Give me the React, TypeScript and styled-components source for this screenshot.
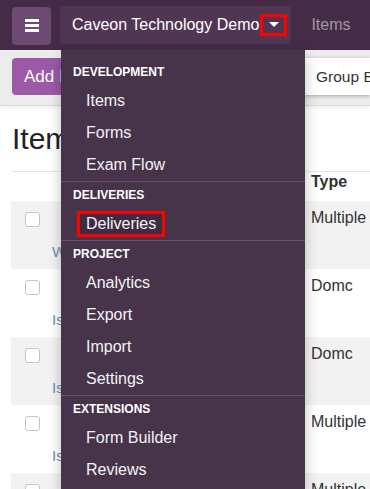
import styled, { createGlobalStyle } from "styled-components";

const GlobalStyle = createGlobalStyle`
    html, body {
        margin: 0;
        padding: 0;
        overflow: hidden;
        background: #ffffff;
        font-family: "Liberation Sans", Arial, sans-serif;
        color: #333333;
    }
`;

const Page = styled.div`
    position: relative;
    width: 370px;
    height: 489px;
    overflow: hidden;
`;

const Navbar = styled.nav`
    display: flex;
    align-items: center;
    height: 50px;
    padding: 0 12px;
    background-color: #442c46;
    box-sizing: border-box;
`;

const MenuToggle = styled.button`
    display: flex;
    flex-direction: column;
    justify-content: center;
    align-items: center;
    gap: 2px;
    width: 39px;
    height: 38px;
    padding: 0;
    border: none;
    border-radius: 4px;
    background-color: #6c4a72;
    margin-top: 1px;

    span {
        display: block;
        width: 14px;
        height: 3px;
        background: #ffffff;
    }
`;

const Brand = styled.div`
    display: flex;
    align-items: center;
    height: 38px;
    margin-left: 9px;
    margin-top: -1px;
    padding: 0 4px 0 12px;
    border-radius: 4px;
    background-color: #513654;
    color: #ffffff;
    font-size: 16px;
    white-space: nowrap;
    box-sizing: border-box;
`;

const CaretBox = styled.span`
    display: flex;
    align-items: center;
    justify-content: center;
    width: 27px;
    height: 22px;
    margin-left: 1px;
    border: 3px solid #ff0000;
    box-sizing: border-box;

    &::after {
        content: "";
        border-top: 5px solid #ffffff;
        border-left: 5px solid transparent;
        border-right: 5px solid transparent;
    }
`;

const NavLink = styled.a`
    margin-left: 20px;
    color: #a596a8;
    font-size: 16px;
    text-decoration: none;
`;

const Toolbar = styled.div`
    display: flex;
    align-items: center;
    justify-content: space-between;
    height: 56px;
    padding: 0 0 0 12px;
    background-color: #ececec;
    border-bottom: 1px solid #dadada;
    box-shadow: 0 2px 3px rgba(0, 0, 0, 0.06);
    box-sizing: border-box;
`;

const AddButton = styled.button`
    height: 37px;
    padding: 0 12px;
    border: none;
    border-radius: 4px;
    background-color: #9b59a6;
    color: #ffffff;
    font-family: inherit;
    font-size: 17px;
    margin-top: -2px;
`;

const GroupBy = styled.div`
    width: 67px;
    height: 37px;
    line-height: 37px;
    padding-left: 13px;
    margin-top: -2px;
    background: #ffffff;
    color: #333333;
    font-size: 15.5px;
    white-space: nowrap;
    overflow: hidden;
    box-shadow: 0 1px 4px rgba(0, 0, 0, 0.3);
    box-sizing: border-box;
`;

const Content = styled.main`
    padding: 16px 0 0 11px;
`;

const Heading = styled.h1`
    margin: 0;
    padding: 0 0 16px 1px;
    font-size: 30px;
    line-height: 33px;
    font-weight: 400;
    color: #222222;
    border-bottom: 1px solid #e6e6e6;
`;

const Row = styled.div<{ $striped?: boolean }>`
    display: grid;
    grid-template-columns: 33px 259px 1fr;
    height: 68px;
    padding-top: 7px;
    box-sizing: border-box;
    background-color: ${(p) => (p.$striped ? "#f2f2f2" : "#ffffff")};
`;

const HeaderRow = styled(Row)`
    height: 29px;
    padding-top: 0;
    line-height: 29px;
    font-size: 14.5px;
    font-weight: 700;
    color: #222222;
`;

const Check = styled.span`
    display: block;
    width: 15px;
    height: 15px;
    margin: 4px 0 0 14px;
    border: 1px solid #c4c4c4;
    border-radius: 3px;
    background: #ffffff;
    box-sizing: border-box;
`;

const NameCell = styled.div`
    padding-left: 8px;
    font-size: 16px;
    line-height: 20px;
`;

const Title = styled.div`
    padding-left: 24px;
    color: #333333;
    white-space: nowrap;
`;

const Tag = styled.div`
    margin-top: 14px;
    color: #6d8fb3;
    font-size: 15px;
    white-space: nowrap;
`;

const TypeCell = styled.div`
    padding-left: 8px;
    font-size: 16px;
    line-height: 20px;
    color: #333333;
    white-space: nowrap;
`;

const Menu = styled.div`
    position: absolute;
    top: 50px;
    left: 61px;
    width: 244px;
    bottom: 0;
    padding-top: 9px;
    background-color: #47334a;
    box-shadow: 0 6px 12px rgba(0, 0, 0, 0.25);
    box-sizing: border-box;
`;

const Section = styled.div`
    & + & {
        border-top: 1px solid #6b4c6f;
    }
`;

const SectionTitle = styled.div`
    padding: 7px 12px 6px;
    line-height: 13px;
    font-size: 12px;
    font-weight: 700;
    color: #ffffff;
    text-transform: uppercase;
`;

const MenuItem = styled.div`
    height: 32px;
    padding: 3px 0 3px 16px;
    box-sizing: border-box;
`;

const MenuLink = styled.span<{ $marked?: boolean }>`
    display: inline-block;
    height: 26px;
    line-height: 20px;
    padding: 0 6px;
    border: 3px solid ${(p) => (p.$marked ? "#ff0000" : "transparent")};
    background: ${(p) => (p.$marked ? "#3f2c42" : "transparent")};
    color: #f4f4f4;
    font-size: 16px;
    box-sizing: border-box;
`;

const sections = [
    { title: "Development", items: ["Items", "Forms", "Exam Flow"] },
    { title: "Deliveries", items: ["Deliveries"] },
    { title: "Project", items: ["Analytics", "Export", "Import", "Settings"] },
    { title: "Extensions", items: ["Form Builder", "Reviews"] },
];

const rows = [
    { title: "Waterfall question", tag: "Workflow", type: "Multiple Choice" },
    { title: "Island capitals", tag: "Is Live", type: "Domc" },
    { title: "Island rivers", tag: "Is Live", type: "Domc" },
    { title: "Island mountains", tag: "Is Live", type: "Multiple Choice" },
    { title: "Island lakes", tag: "Is Live", type: "Multiple Choice" },
];

export default function App() {
    return (
        <Page>
            <GlobalStyle />
            <Navbar>
                <MenuToggle aria-label="menu">
                    <span />
                    <span />
                    <span />
                </MenuToggle>
                <Brand>
                    Caveon Technology Demo
                    <CaretBox />
                </Brand>
                <NavLink>Items</NavLink>
            </Navbar>
            <Toolbar>
                <AddButton>Add Item</AddButton>
                <GroupBy>Group By</GroupBy>
            </Toolbar>
            <Content>
                <Heading>Items</Heading>
                <HeaderRow>
                    <span />
                    <NameCell>
                        <Title>Name</Title>
                    </NameCell>
                    <TypeCell>Type</TypeCell>
                </HeaderRow>
                {rows.map((row, i) => (
                    <Row key={i} $striped={i % 2 === 0}>
                        <div>
                            <Check />
                        </div>
                        <NameCell>
                            <Title>{row.title}</Title>
                            <Tag>{row.tag}</Tag>
                        </NameCell>
                        <TypeCell>{row.type}</TypeCell>
                    </Row>
                ))}
            </Content>
            <Menu>
                {sections.map((section) => (
                    <Section key={section.title}>
                        <SectionTitle>{section.title}</SectionTitle>
                        {section.items.map((item) => (
                            <MenuItem key={item}>
                                <MenuLink $marked={item === "Deliveries"}>{item}</MenuLink>
                            </MenuItem>
                        ))}
                    </Section>
                ))}
            </Menu>
        </Page>
    );
}
